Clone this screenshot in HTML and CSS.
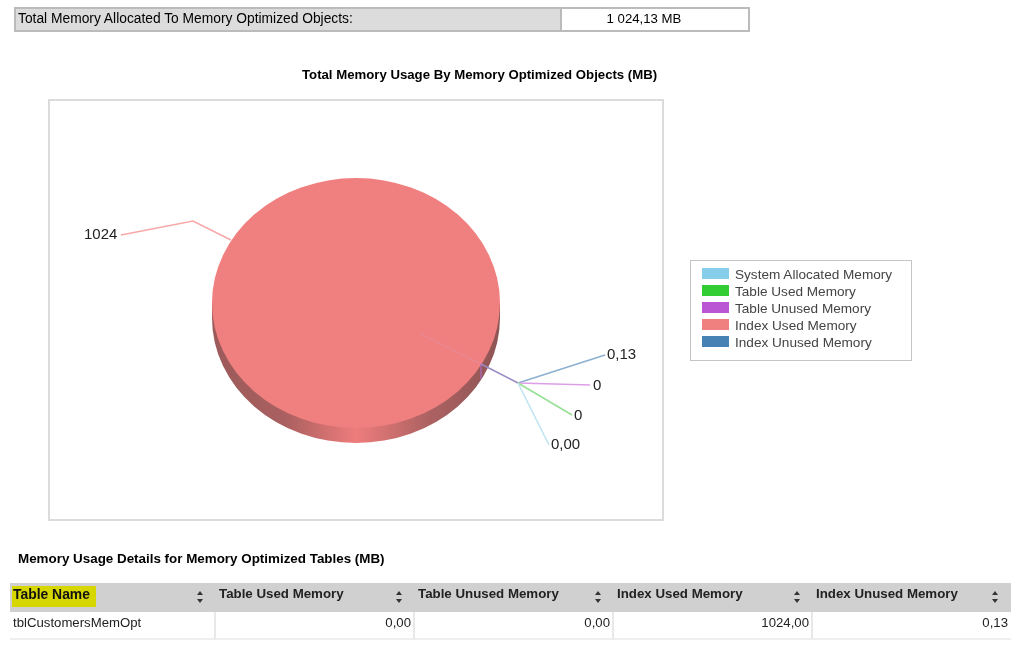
FILE: index.html
```html
<!DOCTYPE html>
<html lang="en">
<head>
<meta charset="utf-8">
<title>Memory Usage By Memory Optimized Objects</title>
<link rel="stylesheet" href="styles.css">
</head>
<body>
<div class="page">
  <div class="summary">
    <div class="summary-label">Total Memory Allocated To Memory Optimized Objects:</div>
    <div class="summary-value">1 024,13 MB</div>
  </div>
  <h1 class="chart-title">Total Memory Usage By Memory Optimized Objects (MB)</h1>
  <div class="chart-row">
    <div class="chart-box">
      <svg class="chart" width="612" height="418" viewBox="50 101 612 418">
        <defs>
          <linearGradient id="rim" x1="0" x2="1" y1="0" y2="0">
            <stop offset="0" stop-color="#9c5a5a"/>
            <stop offset="0.25" stop-color="#a95f5f"/>
            <stop offset="0.5" stop-color="#ee7c7c"/>
            <stop offset="0.75" stop-color="#ad6262"/>
            <stop offset="1" stop-color="#8f5454"/>
          </linearGradient>
        </defs>
        <path d="M212 303V318A144 125 0 0 0 500 318V303Z" fill="url(#rim)"/>
        <ellipse cx="356" cy="303" rx="144" ry="125" fill="#f08080"/>
        <polyline class="leader" points="121,235 193,221 231,240" stroke="#f8a8a8"/>
        <line class="leader-thin" x1="419" y1="333" x2="481" y2="364" stroke="#e68a9c"/>
        <polyline class="leader" points="481,364 518,383" stroke="#9a8cc4"/>
        <polyline class="leader-thin" points="481,364 481,379" stroke="#b070d8"/>
        <polyline class="leader" points="518,383 605,355" stroke="#8cb0d0"/>
        <polyline class="leader" points="518,383 590,385" stroke="#dd9ee8"/>
        <polyline class="leader" points="518,383 572,415" stroke="#98e098"/>
        <polyline class="leader" points="518,383 549,445" stroke="#bde4f2"/>
        <text class="value" x="84" y="239">1024</text>
        <text class="value" x="607" y="359">0,13</text>
        <text class="value" x="593" y="390">0</text>
        <text class="value" x="574" y="420">0</text>
        <text class="value" x="551" y="449">0,00</text>
      </svg>
    </div>
    <ul class="legend">
      <li class="legend-item"><span class="swatch swatch-system"></span>System Allocated Memory</li>
      <li class="legend-item"><span class="swatch swatch-table-used"></span>Table Used Memory</li>
      <li class="legend-item"><span class="swatch swatch-table-unused"></span>Table Unused Memory</li>
      <li class="legend-item"><span class="swatch swatch-index-used"></span>Index Used Memory</li>
      <li class="legend-item"><span class="swatch swatch-index-unused"></span>Index Unused Memory</li>
    </ul>
  </div>
  <h2 class="details-title">Memory Usage Details for Memory Optimized Tables (MB)</h2>
  <div class="grid">
    <div class="head"><span class="head-text marked">Table Name</span><span class="sort"></span></div>
    <div class="head"><span class="head-text">Table Used Memory</span><span class="sort"></span></div>
    <div class="head"><span class="head-text">Table Unused Memory</span><span class="sort"></span></div>
    <div class="head"><span class="head-text">Index Used Memory</span><span class="sort"></span></div>
    <div class="head"><span class="head-text">Index Unused Memory</span><span class="sort"></span></div>
    <div class="cell">tblCustomersMemOpt</div>
    <div class="cell num">0,00</div>
    <div class="cell num">0,00</div>
    <div class="cell num">1024,00</div>
    <div class="cell num">0,13</div>
  </div>
</div>
</body>
</html>
```
FILE: styles.css
```css
* { box-sizing: border-box; }
html, body { margin: 0; padding: 0; background: #fff; }
body { font-family: "Liberation Sans", Arial, sans-serif; color: #111; overflow: hidden; }
.page { width: 1024px; height: 649px; padding-top: 7px; filter: blur(0.35px); }

.summary {
  display: flex;
  width: 736px;
  height: 25px;
  margin-left: 14px;
  border: 2px solid #bbb;
  font-size: 13.8px;
  color: #000;
}
.summary-label {
  width: 546px;
  padding-left: 2px;
  line-height: 19px;
  background: #dcdcdc;
  border-right: 2px solid #bbb;
}
.summary-value { flex: 1; text-align: center; line-height: 19px; padding-right: 22px; font-size: 13.2px; }

.chart-title {
  margin: 35px 0 0 302px;
  font-size: 13.2px;
  line-height: 16px;
  font-weight: bold;
  color: #000;
}
.chart-row { display: flex; align-items: flex-start; margin: 16px 0 0 48px; }
.chart-box { width: 616px; height: 422px; border: 2px solid #dcdcdc; }
.chart { display: block; }
.leader { fill: none; stroke-width: 1.6; }
.leader-thin { fill: none; stroke-width: 1; }
.value { font-family: "Liberation Sans", Arial, sans-serif; font-size: 15px; fill: #222; }

.legend {
  list-style: none;
  margin: 161px 0 0 26px;
  padding: 5px 0 0 11px;
  width: 222px;
  height: 101px;
  border: 1px solid #c4c4c4;
}
.legend-item {
  display: flex;
  align-items: center;
  height: 17px;
  font-size: 13.6px;
  color: #444;
}
.swatch { width: 27px; height: 11px; margin: 0 6px 2px 0; }
.swatch-system { background: #87ceeb; }
.swatch-table-used { background: #32cd32; }
.swatch-table-unused { background: #ba55d3; }
.swatch-index-used { background: #f08080; }
.swatch-index-unused { background: #4682b4; }

.details-title {
  margin: 30px 0 0 18px;
  font-size: 13.4px;
  line-height: 16px;
  font-weight: bold;
  color: #000;
}
.grid {
  display: grid;
  grid-template-columns: 206px repeat(3, 199px) 198px;
  grid-template-rows: 29px 28px;
  width: 1001px;
  margin: 16px 0 0 10px;
  background: #fff;
}
.head {
  display: flex;
  align-items: flex-start;
  justify-content: space-between;
  padding: 3px 0 0 3px;
  background: #d0d0d0;
  font-size: 13.3px;
  font-weight: bold;
  line-height: 16px;
  color: #222;
}
.head-text { display: inline-block; }
.marked {
  margin: 0 0 0 -1px;
  padding: 0 6px 5px 1px;
  height: 21px;
  background: #d6d600;
  font-size: 13.9px;
  color: #111;
}
.sort {
  position: relative;
  width: 7px;
  height: 12px;
  margin: 5px 12px 0 0;
}
.sort::before, .sort::after {
  content: "";
  position: absolute;
  left: 0;
  border-left: 3.5px solid transparent;
  border-right: 3.5px solid transparent;
}
.sort::before { top: 0; border-bottom: 4.5px solid #333; }
.sort::after { bottom: 0; border-top: 4.5px solid #333; }
.cell {
  padding: 3px 2px 0 3px;
  font-size: 13.2px;
  line-height: 16px;
  color: #222;
  border-right: 2px solid #e8e8e8;
  border-bottom: 2px solid #efefef;
}
.cell:last-child { border-right: 0; padding-right: 3px; }
.num { text-align: right; }
```
